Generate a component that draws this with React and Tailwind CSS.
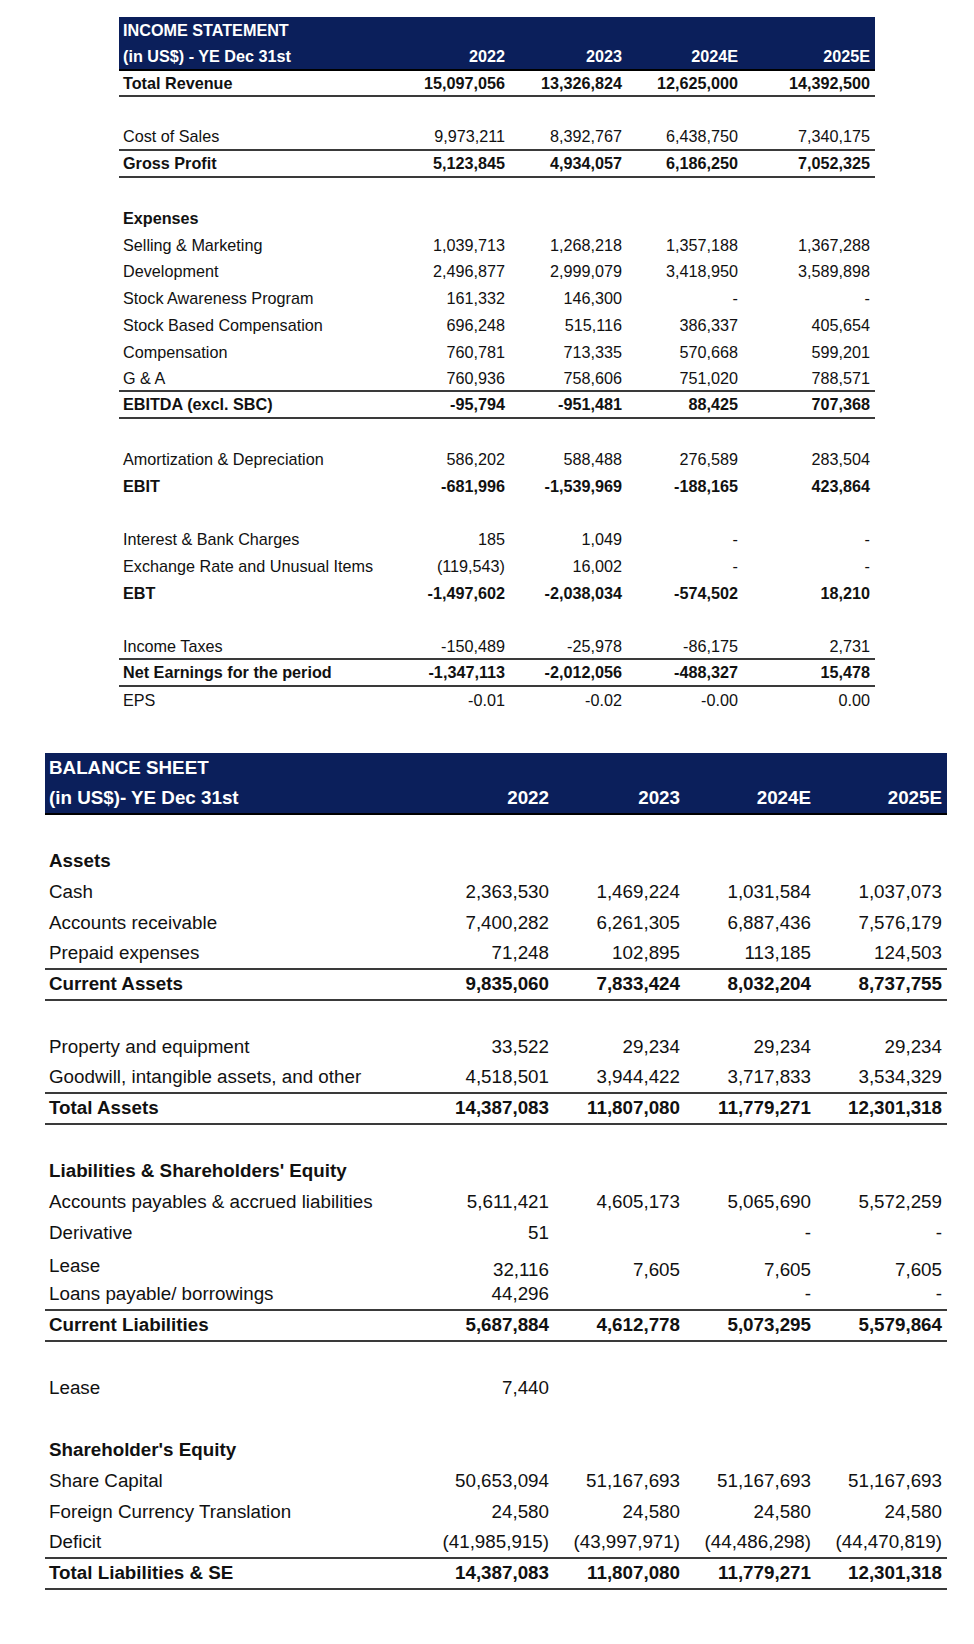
import React from 'react';

const IS_GRID = 'grid grid-cols-[275px_116px_117px_116px_132px] h-[26.8px] items-center';
const BS_GRID = 'grid grid-cols-[378px_131px_131px_131px_131px] h-[31px] items-center';
const LINE = 'border-b-2 border-[#3a3a3a]';

const YEARS = ['2022', '2023', '2024E', '2025E'];

const INCOME = [
  { l: 'Total Revenue', v: ['15,097,056', '13,326,824', '12,625,000', '14,392,500'], b: true, line: true },
  {},
  { l: 'Cost of Sales', v: ['9,973,211', '8,392,767', '6,438,750', '7,340,175'], line: true },
  { l: 'Gross Profit', v: ['5,123,845', '4,934,057', '6,186,250', '7,052,325'], b: true, line: true },
  {},
  { l: 'Expenses', b: true },
  { l: 'Selling & Marketing', v: ['1,039,713', '1,268,218', '1,357,188', '1,367,288'] },
  { l: 'Development', v: ['2,496,877', '2,999,079', '3,418,950', '3,589,898'] },
  { l: 'Stock Awareness Program', v: ['161,332', '146,300', '-', '-'] },
  { l: 'Stock Based Compensation', v: ['696,248', '515,116', '386,337', '405,654'] },
  { l: 'Compensation', v: ['760,781', '713,335', '570,668', '599,201'] },
  { l: 'G & A', v: ['760,936', '758,606', '751,020', '788,571'], line: true },
  { l: 'EBITDA (excl. SBC)', v: ['-95,794', '-951,481', '88,425', '707,368'], b: true, line: true },
  {},
  { l: 'Amortization & Depreciation', v: ['586,202', '588,488', '276,589', '283,504'] },
  { l: 'EBIT', v: ['-681,996', '-1,539,969', '-188,165', '423,864'], b: true },
  {},
  { l: 'Interest & Bank Charges', v: ['185', '1,049', '-', '-'] },
  { l: 'Exchange Rate and Unusual Items', v: ['(119,543)', '16,002', '-', '-'] },
  { l: 'EBT', v: ['-1,497,602', '-2,038,034', '-574,502', '18,210'], b: true },
  {},
  { l: 'Income Taxes', v: ['-150,489', '-25,978', '-86,175', '2,731'], line: true },
  { l: 'Net Earnings for the period', v: ['-1,347,113', '-2,012,056', '-488,327', '15,478'], b: true, line: true },
  { l: 'EPS', v: ['-0.01', '-0.02', '-0.00', '0.00'] },
];

const BALANCE = [
  {},
  { l: 'Assets', b: true },
  { l: 'Cash', v: ['2,363,530', '1,469,224', '1,031,584', '1,037,073'] },
  { l: 'Accounts receivable', v: ['7,400,282', '6,261,305', '6,887,436', '7,576,179'] },
  { l: 'Prepaid expenses', v: ['71,248', '102,895', '113,185', '124,503'], line: true },
  { l: 'Current Assets', v: ['9,835,060', '7,833,424', '8,032,204', '8,737,755'], b: true, line: true },
  {},
  { l: 'Property and equipment', v: ['33,522', '29,234', '29,234', '29,234'] },
  { l: 'Goodwill, intangible assets, and other', v: ['4,518,501', '3,944,422', '3,717,833', '3,534,329'], line: true },
  { l: 'Total Assets', v: ['14,387,083', '11,807,080', '11,779,271', '12,301,318'], b: true, line: true },
  {},
  { l: "Liabilities & Shareholders' Equity", b: true },
  { l: 'Accounts payables & accrued liabilities', v: ['5,611,421', '4,605,173', '5,065,690', '5,572,259'] },
  { l: 'Derivative', v: ['51', '', '-', '-'] },
  { l: 'Lease', v: ['32,116', '7,605', '7,605', '7,605'], low: true },
  { l: 'Loans payable/ borrowings', v: ['44,296', '', '-', '-'], line: true },
  { l: 'Current Liabilities', v: ['5,687,884', '4,612,778', '5,073,295', '5,579,864'], b: true, line: true },
  {},
  { l: 'Lease', v: ['7,440', '', '', ''] },
  {},
  { l: "Shareholder's Equity", b: true },
  { l: 'Share Capital', v: ['50,653,094', '51,167,693', '51,167,693', '51,167,693'] },
  { l: 'Foreign Currency Translation', v: ['24,580', '24,580', '24,580', '24,580'] },
  { l: 'Deficit', v: ['(41,985,915)', '(43,997,971)', '(44,486,298)', '(44,470,819)'], line: true },
  { l: 'Total Liabilities & SE', v: ['14,387,083', '11,807,080', '11,779,271', '12,301,318'], b: true, line: true },
];

function Row({ row, grid }) {
  const vals = row.v || ['', '', '', ''];
  return (
    <div className={`${grid} ${row.line ? LINE : ''} ${row.b ? 'font-bold' : ''}`}>
      <span className="pl-[4px] whitespace-nowrap">{row.l || ''}</span>
      {vals.map((v, i) => (
        <span key={i} className={`text-right pr-[5px] whitespace-nowrap ${row.low ? 'pt-[7px]' : ''}`}>{v}</span>
      ))}
    </div>
  );
}

function Header({ title, sub, grid }) {
  return (
    <div className="bg-[#0b1f5b] text-white font-bold">
      <div className={grid}>
        <span className="pl-[4px] whitespace-nowrap">{title}</span>
      </div>
      <div className={`${grid} border-b-2 border-black`}>
        <span className="pl-[4px] whitespace-nowrap">{sub}</span>
        {YEARS.map(y => <span key={y} className="text-right pr-[5px]">{y}</span>)}
      </div>
    </div>
  );
}

export default function App() {
  return (
    <div className="w-[974px] min-h-[1644px] bg-white pt-[17px] text-[#111] font-['Liberation_Sans',Arial,sans-serif]">
      <div className="ml-[119px] w-[756px] text-[16.2px]">
        <Header title="INCOME STATEMENT" sub="(in US$) - YE Dec 31st" grid={IS_GRID} />
        {INCOME.map((r, i) => <Row key={i} row={r} grid={IS_GRID} />)}
      </div>

      <div className="ml-[45px] mt-[39px] w-[902px] text-[18.8px]">
        <Header title="BALANCE SHEET" sub="(in US$)- YE Dec 31st" grid={BS_GRID} />
        {BALANCE.map((r, i) => <Row key={i} row={r} grid={BS_GRID} />)}
      </div>
    </div>
  );
}
